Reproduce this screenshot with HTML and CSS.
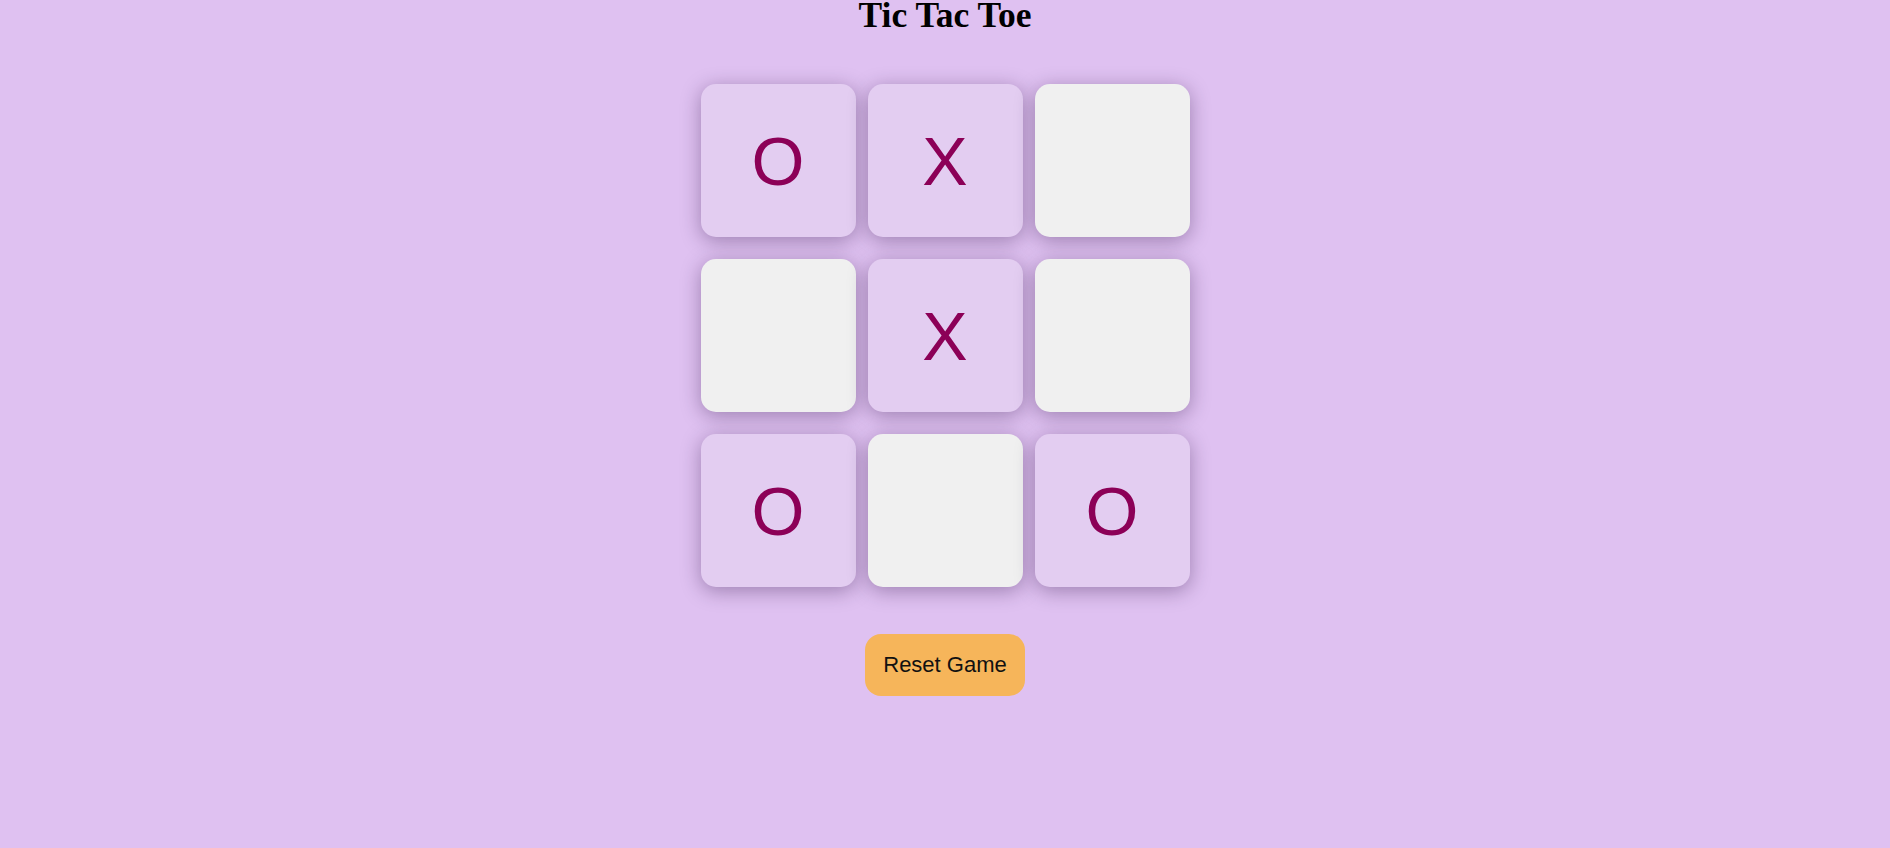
FILE: index.html
```html
<!DOCTYPE html>
<html lang="en">
<head>
<meta charset="utf-8">
<title>Tic Tac Toe</title>
<link rel="stylesheet" href="styles.css">
</head>
<body>
<main class="game">
  <h1 class="title">Tic Tac Toe</h1>
  <div class="board">
    <div class="cell filled">O</div>
    <div class="cell filled">X</div>
    <div class="cell"></div>
    <div class="cell"></div>
    <div class="cell filled">X</div>
    <div class="cell"></div>
    <div class="cell filled">O</div>
    <div class="cell"></div>
    <div class="cell filled">O</div>
  </div>
  <button class="reset">Reset Game</button>
</main>
</body>
</html>
```

FILE: styles.css
```css
html, body {
  margin: 0;
  padding: 0;
}
body {
  background: #dfc1f1;
  min-height: 848px;
  font-family: "Liberation Sans", Arial, sans-serif;
}
.game {
  display: flex;
  flex-direction: column;
  align-items: center;
}
.title {
  font-family: "Liberation Serif", "Times New Roman", serif;
  font-weight: bold;
  font-size: 35.5px;
  line-height: 0.85;
  margin: 0;
  color: #000;
}
.board {
  margin-top: 54px;
  display: grid;
  grid-template-columns: repeat(3, 155px);
  grid-auto-rows: 153px;
  column-gap: 12px;
  row-gap: 22px;
}
.cell {
  background: #f0f0f0;
  border-radius: 15px;
  box-shadow: 0 4px 20px rgba(40, 10, 60, 0.36);
  display: flex;
  align-items: center;
  justify-content: center;
  font-size: 68px;
  line-height: 1;
  color: #8c0057;
}
.cell.filled {
  background: #e3cdf1;
}
.reset {
  margin-top: 47px;
  background: #f6b55a;
  border: none;
  border-radius: 16px;
  padding: 18px 18px;
  font-family: "Liberation Sans", Arial, sans-serif;
  font-size: 22px;
  line-height: 26px;
  color: #111;
  cursor: pointer;
}
```
